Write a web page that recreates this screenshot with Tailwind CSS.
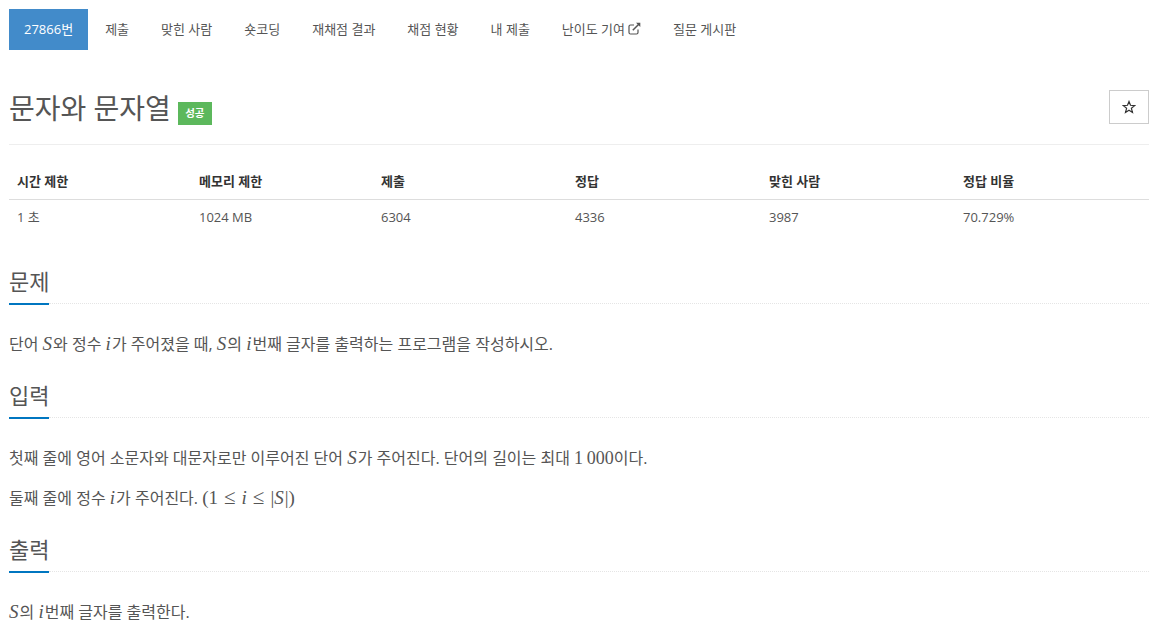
<!DOCTYPE html>
<html lang="ko">
<head>
  <meta charset="UTF-8" />
  <title>문자와 문자열</title>
  <script src="https://cdn.jsdelivr.net/npm/@tailwindcss/browser@4"></script>
</head>
<body class="bg-white h-[631px] overflow-hidden text-[#555] font-['Open_Sans','Noto_Sans_CJK_KR',sans-serif]">
  <div class="w-[1140px] ml-[9px] pt-[9px]">

    <!-- tabs -->
    <ul class="flex h-[41px] text-[13px] leading-[41px]">
      <li class="px-[15px] bg-[#428bca] text-white">27866번</li>
      <li class="ml-[2px] px-[15px]">제출</li>
      <li class="ml-[2px] px-[15px]">맞힌 사람</li>
      <li class="ml-[2px] px-[15px]">숏코딩</li>
      <li class="ml-[2px] px-[15px]">재채점 결과</li>
      <li class="ml-[2px] px-[15px]">채점 현황</li>
      <li class="ml-[2px] px-[15px]">내 제출</li>
      <li class="ml-[2px] px-[15px] flex items-center gap-[3px]">
        난이도 기여
        <svg class="w-[13px] h-[13px] -mt-[2px]" viewBox="0 0 13 13" fill="none" stroke="#555" stroke-width="1.2">
          <path d="M10 7.5v3a1.5 1.5 0 0 1-1.5 1.5h-6A1.5 1.5 0 0 1 1 10.500v-6A1.500 1.500 0 0 1 2.500 3H6" />
          <path d="M4.800 8.200 11.500 1.500" stroke-width="1.500" />
          <path d="M8 .8h4.300v4.300z" fill="#555" stroke="none" />
        </svg>
      </li>
      <li class="ml-[2px] px-[15px]">질문 게시판</li>
    </ul>

    <!-- title -->
    <div class="flex justify-between mt-10 h-[55px] border-b border-[#eee]">
      <div class="flex items-start">
        <h1 class="text-[28px] leading-[36px]">문자와 문자열</h1>
        <span class="ml-[7px] mt-[12px] w-[34px] h-[23px] bg-[#5cb85c] text-white text-[10.500px] font-bold leading-[23px] text-center">성공</span>
      </div>
      <button class="w-10 h-[34px] border border-[#ccc] flex items-center justify-center">
        <svg class="w-[14px] h-[14px] -ml-[1px] -mt-[1px]" viewBox="0 0 14 14" fill="none" stroke="#333" stroke-width="1.200" stroke-linejoin="miter">
          <path d="M7 1.500 8.500 5.300 12.700 5.600 9.400 8.300 10.500 12.500 7 10.200 3.500 12.500 4.600 8.300 1.300 5.600 5.500 5.300z" />
        </svg>
      </button>
    </div>

    <!-- info table -->
    <table class="mt-5 w-[1140px] table-fixed text-[13px] text-left">
      <colgroup>
        <col class="w-[182px]" /><col class="w-[182px]" /><col class="w-[194px]" /><col class="w-[194px]" /><col class="w-[194px]" /><col class="w-[194px]" />
      </colgroup>
      <thead>
        <tr class="border-b border-[#ddd] text-[#333]">
          <th class="px-2 h-[34px] font-bold">시간 제한</th>
          <th class="px-2 font-bold">메모리 제한</th>
          <th class="px-2 font-bold">제출</th>
          <th class="px-2 font-bold">정답</th>
          <th class="px-2 font-bold">맞힌 사람</th>
          <th class="px-2 font-bold">정답 비율</th>
        </tr>
      </thead>
      <tbody>
        <tr>
          <td class="px-2 h-[36px]">1 초</td>
          <td class="px-2">1024 MB</td>
          <td class="px-2">6304</td>
          <td class="px-2">4336</td>
          <td class="px-2">3987</td>
          <td class="px-2">70.729%</td>
        </tr>
      </tbody>
    </table>

    <!-- 문제 -->
    <section class="mt-[29px]">
      <h2 class="text-[22px] leading-[35px] h-[39px]">문제</h2>
      <div class="flex items-start h-[2px]">
        <div class="w-10 h-[2px] bg-[#0076c0]"></div>
        <div class="flex-1 border-t border-dotted border-[#e5e5e5]"></div>
      </div>
      <p class="mt-[29px] text-[16px] leading-[20px]">단어 <span class="font-['Liberation_Serif',serif] italic text-[19px] leading-[16px] pr-[1px]">S</span>와 정수 <span class="font-['Liberation_Serif',serif] italic text-[19px] leading-[16px] pr-[1px]">i</span>가 주어졌을 때, <span class="font-['Liberation_Serif',serif] italic text-[19px] leading-[16px] pr-[1px]">S</span>의 <span class="font-['Liberation_Serif',serif] italic text-[19px] leading-[16px] pr-[1px]">i</span>번째 글자를 출력하는 프로그램을 작성하시오.</p>
    </section>

    <!-- 입력 -->
    <section class="mt-[24px]">
      <h2 class="text-[22px] leading-[35px] h-[39px]">입력</h2>
      <div class="flex items-start h-[2px]">
        <div class="w-10 h-[2px] bg-[#0076c0]"></div>
        <div class="flex-1 border-t border-dotted border-[#e5e5e5]"></div>
      </div>
      <p class="mt-[29px] text-[16px] leading-[20px]">첫째 줄에 영어 소문자와 대문자로만 이루어진 단어 <span class="font-['Liberation_Serif',serif] italic text-[19px] leading-[16px] pr-[1px]">S</span>가 주어진다. 단어의 길이는 최대 <span class="font-['Liberation_Serif',serif] text-[18px] leading-[16px]">1&#8201;000</span>이다.</p>
      <p class="mt-[20px] text-[16px] leading-[20px]">둘째 줄에 정수 <span class="font-['Liberation_Serif',serif] italic text-[19px] leading-[16px] pr-[1px]">i</span>가 주어진다. <span class="font-['Liberation_Serif',serif] text-[19px] leading-[16px]">(1<span class="mx-[6px] text-[21px]">≤</span><span class="italic">i</span><span class="mx-[6px] text-[21px]">≤</span>|<span class="italic pr-[1px]">S</span>|)</span></p>
    </section>

    <!-- 출력 -->
    <section class="mt-[24px]">
      <h2 class="text-[22px] leading-[35px] h-[39px]">출력</h2>
      <div class="flex items-start h-[2px]">
        <div class="w-10 h-[2px] bg-[#0076c0]"></div>
        <div class="flex-1 border-t border-dotted border-[#e5e5e5]"></div>
      </div>
      <p class="mt-[29px] text-[16px] leading-[20px]"><span class="font-['Liberation_Serif',serif] italic text-[19px] leading-[16px] pr-[1px]">S</span>의 <span class="font-['Liberation_Serif',serif] italic text-[19px] leading-[16px] pr-[1px]">i</span>번째 글자를 출력한다.</p>
    </section>
  </div>
</body>
</html>
